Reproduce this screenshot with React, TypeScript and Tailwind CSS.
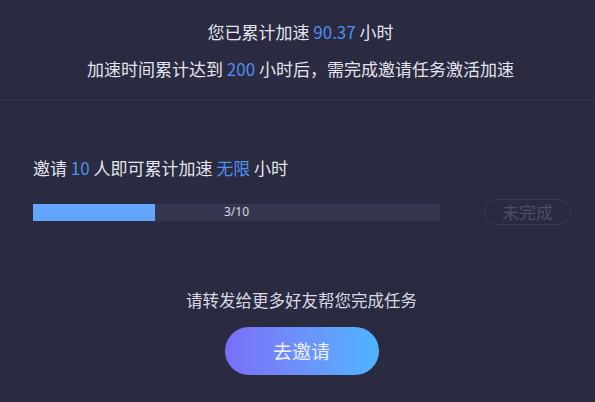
const font = "font-['Microsoft_YaHei','Noto_Sans_CJK_SC',sans-serif]"

function Blue({ children }: { children: React.ReactNode }) {
  return <span className="text-[#4f8ff0]">{children}</span>
}

export default function App() {
  const done = 3
  const total = 10
  const pct = (done / total) * 100

  return (
    <div
      className={`${font} w-[595px] h-[402px] bg-[#2a2a40] text-[#e4e5ee] overflow-hidden`}
    >
      {/* summary */}
      <div className="h-[100px] border-b border-[#34354c] flex flex-col items-center pt-[21px] gap-[15px] text-[17px] leading-[22px]">
        <p className="ml-[6px]">
          您已累计加速 <Blue>90.37</Blue> 小时
        </p>
        <p className="ml-[6px]">
          加速时间累计达到 <Blue>200</Blue> 小时后，需完成邀请任务激活加速
        </p>
      </div>

      {/* task */}
      <div className="pl-[33px] pr-[24px] pt-[57px]">
        <p className="text-[17px] leading-[22px]">
          邀请 <Blue>10</Blue> 人即可累计加速 <Blue>无限</Blue> 小时
        </p>
        <div className="mt-[20px] flex items-center">
          <div className="relative w-[407px] h-[17px] bg-[#35364f]">
            <div
              className="h-full bg-[#64a5ff]"
              style={{ width: `${pct}%` }}
            />
            <span className="absolute inset-0 flex items-center justify-center text-[12px] text-[#d9dae6] font-['Noto_Sans',sans-serif]">
              {done}/{total}
            </span>
          </div>
          <div className="ml-[44px] w-[87px] h-[26px] rounded-full border border-[#3a3b53] flex items-center justify-center text-[17px] text-[#4d4e66]">
            未完成
          </div>
        </div>
      </div>

      {/* share */}
      <div className="mt-[64px] flex flex-col items-center">
        <p className="text-[16.5px] leading-[22px] text-[#d8d9e4] ml-[8px]">
          请转发给更多好友帮您完成任务
        </p>
        <button className="mt-[16px] w-[154px] h-[48px] rounded-full bg-gradient-to-r from-[#7b6df7] to-[#4db4ff] text-[19px] text-[#eef1ff] ml-[8px]">
          去邀请
        </button>
      </div>
    </div>
  )
}
